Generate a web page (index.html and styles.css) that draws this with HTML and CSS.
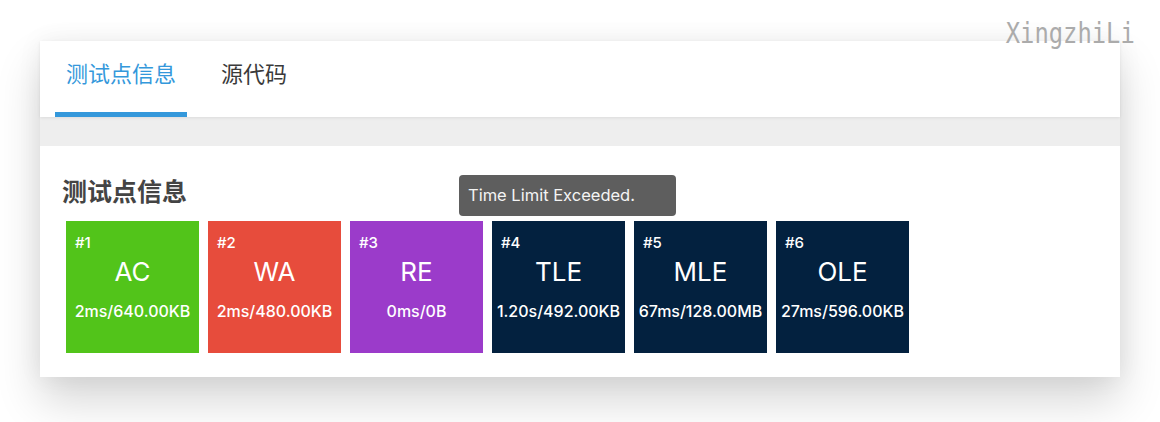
FILE: index.html
```html
<!DOCTYPE html>
<html lang="zh">
<head>
<meta charset="utf-8">
<title>测试点信息</title>
<link rel="stylesheet" href="styles.css">
</head>
<body>
<div class="watermark">XingzhiLi</div>
<div class="window">
  <div class="tabs">
    <div class="tab active">测试点信息</div>
    <div class="tab">源代码</div>
  </div>
  <div class="panel">
    <h2 class="title">测试点信息</h2>
    <div class="cases">
      <div class="case ac"><div class="num">#1</div><div class="status">AC</div><div class="usage">2ms/640.00KB</div></div>
      <div class="case wa"><div class="num">#2</div><div class="status">WA</div><div class="usage">2ms/480.00KB</div></div>
      <div class="case re"><div class="num">#3</div><div class="status">RE</div><div class="usage">0ms/0B</div></div>
      <div class="case dark has-tip"><div class="tooltip">Time Limit Exceeded.</div><div class="num">#4</div><div class="status">TLE</div><div class="usage">1.20s/492.00KB</div></div>
      <div class="case dark"><div class="num">#5</div><div class="status">MLE</div><div class="usage">67ms/128.00MB</div></div>
      <div class="case dark"><div class="num">#6</div><div class="status">OLE</div><div class="usage">27ms/596.00KB</div></div>
    </div>
  </div>
</div>
</body>
</html>
```
FILE: styles.css
```css
html, body {
  margin: 0;
  padding: 0;
  background: #ffffff;
}
body {
  font-family: Inter, "Noto Sans CJK SC", sans-serif;
  position: relative;
  width: 1160px;
  height: 422px;
  overflow: hidden;
  padding-top: 41px;
  box-sizing: border-box;
}
.watermark {
  position: absolute;
  top: 20px;
  right: 25px;
  font-family: "DejaVu Sans Mono", monospace;
  font-size: 28px;
  line-height: 28px;
  color: #ababab;
  transform: scaleX(0.85);
  transform-origin: right top;
  z-index: 5;
}
.window {
  margin: 0 40px;
  width: 1080px;
  height: 336px;
  background: #eeeeee;
  box-shadow: 0 24px 42px rgba(0, 0, 0, 0.16), 0 0 24px rgba(0, 0, 0, 0.06);
  display: flex;
  flex-direction: column;
}
.tabs {
  background: #ffffff;
  height: 76px;
  box-sizing: border-box;
  padding-left: 15px;
  display: flex;
  gap: 23px;
  box-shadow: 0 1px 3px rgba(0, 0, 0, 0.08);
  position: relative;
  z-index: 1;
}
.tab {
  font-family: "Noto Sans CJK SC", sans-serif;
  font-size: 22px;
  line-height: 30px;
  padding: 16px 11px 0;
  color: #3a3a3a;
  box-sizing: border-box;
  height: 76px;
}
.tab.active {
  color: #3498db;
  border-bottom: 5px solid #3498db;
}
.panel {
  margin-top: 29px;
  background: #ffffff;
  flex: 1;
  padding: 28px 22px 0;
}
.title {
  margin: 0;
  font-family: "Noto Sans CJK SC", sans-serif;
  font-size: 25px;
  line-height: 32px;
  font-weight: 700;
  color: #444444;
}
.cases {
  display: flex;
  gap: 9px;
  margin: 15px 0 0 4px;
}
.case {
  width: 133px;
  height: 132px;
  box-sizing: border-box;
  padding: 13px 0 0 9px;
  color: #ffffff;
  position: relative;
}
.case.ac { background: #52c41a; }
.case.wa { background: #e74c3c; }
.case.re { background: #9b3bca; }
.case.dark { background: #03213f; }
.num {
  font-size: 15px;
  line-height: 17px;
  font-weight: 500;
}
.status {
  margin: 6px 0 0 -9px;
  text-align: center;
  font-size: 26px;
  line-height: 30px;
}
.usage {
  margin: 14px 0 0 -9px;
  text-align: center;
  font-size: 16px;
  line-height: 20px;
  font-weight: 500;
  white-space: nowrap;
}
.tooltip {
  position: absolute;
  left: -33px;
  top: -46px;
  width: 217px;
  height: 41px;
  box-sizing: border-box;
  padding: 10px 9px 0;
  background: #5e5e5e;
  border-radius: 4px;
  color: #f4f4f4;
  font-size: 16.5px;
  line-height: 20px;
  white-space: nowrap;
  z-index: 3;
}
```
